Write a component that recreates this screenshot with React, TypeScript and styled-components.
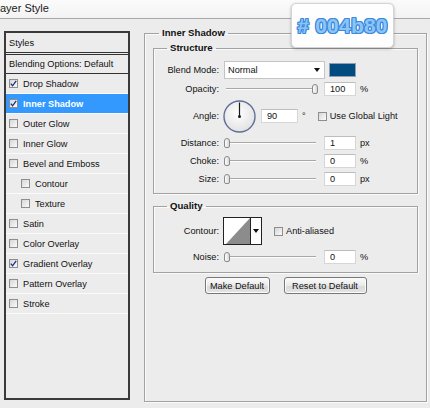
import React from "react"
import styled, { createGlobalStyle } from "styled-components"

const GlobalStyle = createGlobalStyle`
    html, body {
        margin: 0;
        padding: 0;
        background: #ececec;
    }
    body {
        font-family: "Liberation Sans", Arial, sans-serif;
        font-size: 9.2px;
        color: #111;
    }
`

const Window = styled.div`
    width: 430px;
    height: 408px;
    position: relative;
    overflow: hidden;
    background: #ececec;
`

const TitleBar = styled.div`
    display: flex;
    align-items: center;
    background: linear-gradient(#fbfbfb, #f3f3f3);
    border-bottom: 1px solid #a9a9a9;
    font-size: 11px;
    color: #1a1a1a;
    padding-bottom: 3px;
    box-sizing: content-box;
    height: 15px;
`

const Main = styled.div`
    display: flex;
    align-items: flex-start;
    padding: 8px 0 0 4px;
    gap: 14px;
`

const StylesPanel = styled.div`
    margin-top: 4px;
    width: 126px;
    height: 369px;
    box-sizing: border-box;
    border: 2px solid #3a3a3a;
    display: flex;
    flex-direction: column;
`

const PanelHeader = styled.div`
    height: 19px;
    display: flex;
    align-items: center;
    padding-left: 3px;
    border-bottom: 3px double #333;
`

const BlendingRow = styled.div`
    height: 18px;
    display: flex;
    align-items: center;
    padding-left: 3px;
    border-bottom: 1px solid #333;
`

const StyleItem = styled.div<{ $active?: boolean; $indent?: boolean }>`
    height: 19px;
    display: flex;
    align-items: center;
    gap: 5px;
    padding-left: ${({ $indent }) => ($indent ? "15px" : "3px")};
    border-bottom: 1px solid #fbfbfb;
    background: ${({ $active }) => ($active ? "#3399ff" : "transparent")};
    color: ${({ $active }) => ($active ? "#fff" : "#111")};
    font-weight: ${({ $active }) => ($active ? "bold" : "normal")};
`

const Box = styled.span`
    width: 9px;
    height: 9px;
    flex: none;
    box-sizing: border-box;
    border: 1px solid #8e8e8e;
    background: linear-gradient(135deg, #d6d6d6, #fbfbfb);
    display: inline-flex;
    align-items: center;
    justify-content: center;
`

const CheckBox: React.FC<{ checked?: boolean }> = ({ checked }) => (
    <Box>
        {checked && (
            <svg width="7" height="7" viewBox="0 0 7 7">
                <path d="M0.8 3.6 L2.6 5.8 L6.2 0.8" fill="none" stroke="#1c2f86" strokeWidth="1.3" />
            </svg>
        )}
    </Box>
)

const Group = styled.fieldset<{ $width?: number; $height?: number; $pad?: number; $mt?: number }>`
    margin: ${({ $mt }) => $mt || 0}px 0 0 0;
    min-inline-size: 0;
    box-sizing: border-box;
    border: 1px solid #a2a2a2;
    box-shadow: inset 1px 1px 0 #fafafa, 1px 1px 0 #fafafa;
    padding: 0 ${({ $pad }) => $pad || 0}px;
    ${({ $width }) => ($width ? `width: ${$width}px;` : "")}
    ${({ $height }) => ($height ? `height: ${$height}px;` : "")}
`

const Legend = styled.legend<{ $offset: number }>`
    font-weight: bold;
    font-size: 9.6px;
    line-height: 12px;
    padding: 0 3px;
    margin-left: ${({ $offset }) => $offset}px;
    color: #111;
`

const GroupBody = styled.div<{ $top: number; $bottom: number }>`
    display: flex;
    flex-direction: column;
    padding: ${({ $top }) => $top}px 0 ${({ $bottom }) => $bottom}px 0;
`

const OuterBody = styled.div`
    display: flex;
    flex-direction: column;
    padding-top: 3px;
`

const Row = styled.div<{ $h: number; $mt?: number }>`
    height: ${({ $h }) => $h}px;
    margin-top: ${({ $mt }) => $mt || 0}px;
    display: flex;
    align-items: center;
`

const Label = styled.div`
    width: 65px;
    text-align: right;
    margin-right: 5px;
    flex: none;
`

const Select = styled.div`
    width: 101px;
    height: 18px;
    box-sizing: border-box;
    background: #fff;
    border: 1px solid #c4c4c4;
    display: flex;
    align-items: center;
    justify-content: space-between;
    padding: 0 4px 0 3px;
`

const Caret = styled.span`
    width: 0;
    height: 0;
    border-left: 3px solid transparent;
    border-right: 3px solid transparent;
    border-top: 4px solid #111;
`

const Swatch = styled.div`
    width: 27px;
    height: 14px;
    margin-left: 4px;
    background: #004b80;
    border: 1px solid #8d9fb0;
    box-sizing: border-box;
`

const SliderWrap = styled.div`
    width: 94px;
    height: 12px;
    position: relative;
    display: flex;
    align-items: center;
    flex: none;
`

const Track = styled.div`
    width: 100%;
    height: 1px;
    margin: 0 2px;
    background: #a8a8a8;
    border-bottom: 1px solid #fdfdfd;
`

const Thumb = styled.div`
    position: absolute;
    top: 1px;
    width: 6px;
    height: 10px;
    box-sizing: border-box;
    border: 1px solid #8a8a8a;
    border-radius: 3px 3px 2px 2px;
    background: linear-gradient(90deg, #fdfdfd, #d9d9d9);
`

const Slider: React.FC<{ value: number }> = ({ value }) => (
    <SliderWrap>
        <Track />
        <Thumb style={{ left: `${value * 88}px` }} />
    </SliderWrap>
)

const NumberInput = styled.div<{ $w?: number; $ml?: number }>`
    width: ${({ $w }) => $w || 32}px;
    height: 14px;
    margin-left: ${({ $ml }) => ($ml === undefined ? 6 : $ml)}px;
    box-sizing: border-box;
    background: #fff;
    border: 1px solid #d6d6d6;
    border-top-color: #bdbdbd;
    display: flex;
    align-items: center;
    padding-left: 5px;
    flex: none;
`

const Unit = styled.span<{ $raise?: boolean }>`
    margin-left: 4px;
    ${({ $raise }) => ($raise ? "align-self: flex-start; margin-top: 11px;" : "")}
`

const Dial = styled.svg`
    flex: none;
    margin-left: -1px;
`

const InlineCheck = styled.label<{ $ml: number }>`
    display: flex;
    align-items: center;
    gap: 3px;
    margin-left: ${({ $ml }) => $ml}px;
`

const ContourPicker = styled.div`
    display: flex;
    height: 28px;
    box-sizing: border-box;
    border: 1px solid #222;
    margin-left: -1px;
    background: #fff;
`

const ContourArrow = styled.div`
    width: 10px;
    border-left: 1px solid #222;
    display: flex;
    align-items: center;
    justify-content: center;
`

const ButtonRow = styled.div`
    display: flex;
    justify-content: center;
    gap: 14px;
    margin-top: 4px;
`

const Button = styled.button<{ $w: number }>`
    width: ${({ $w }) => $w}px;
    height: 17px;
    padding: 0;
    font-family: inherit;
    font-size: 9.2px;
    color: #111;
    border: 1px solid #777;
    border-radius: 3px;
    background: linear-gradient(#fbfbfb, #e9e9e9 50%, #d9d9d9 51%, #e4e4e4);
    box-shadow: inset 0 0 0 1px #fcfcfc;
`

const ColorBadge = styled.div`
    position: absolute;
    left: 291px;
    top: 3px;
    width: 103px;
    height: 45px;
    box-sizing: border-box;
    background: #fefefe;
    border: 1px solid #d4d4d4;
    border-radius: 5px;
    box-shadow: 0 1px 3px rgba(0, 0, 0, 0.28);
    display: flex;
    align-items: center;
    justify-content: center;
    font-weight: bold;
    font-size: 21px;
    color: #8cc5f5;
    text-shadow: 1px 0 0 #3a8ae0, -1px 0 0 #3a8ae0, 0 1px 0 #3a8ae0, 0 -1px 0 #3a8ae0,
        1px 1px 0 #3a8ae0, -1px -1px 0 #3a8ae0, 1px -1px 0 #3a8ae0, -1px 1px 0 #3a8ae0;
    letter-spacing: 0.2px;
`

const styleItems = [
    { name: "Drop Shadow", checked: true },
    { name: "Inner Shadow", checked: true, active: true },
    { name: "Outer Glow" },
    { name: "Inner Glow" },
    { name: "Bevel and Emboss" },
    { name: "Contour", indent: true },
    { name: "Texture", indent: true },
    { name: "Satin" },
    { name: "Color Overlay" },
    { name: "Gradient Overlay", checked: true },
    { name: "Pattern Overlay" },
    { name: "Stroke" },
]

const App: React.FC = () => {
    return (
        <Window>
            <GlobalStyle />
            <TitleBar>ayer Style</TitleBar>
            <Main>
                <StylesPanel>
                    <PanelHeader>Styles</PanelHeader>
                    <BlendingRow>Blending Options: Default</BlendingRow>
                    {styleItems.map((item) => (
                        <StyleItem key={item.name} $active={item.active} $indent={item.indent}>
                            <CheckBox checked={item.checked} />
                            {item.name}
                        </StyleItem>
                    ))}
                </StylesPanel>

                <Group $width={283} $height={375} $pad={8}>
                    <Legend $offset={6}>Inner Shadow</Legend>
                    <OuterBody>
                        <Group>
                            <Legend $offset={13}>Structure</Legend>
                            <GroupBody $top={7} $bottom={7}>
                                <Row $h={18}>
                                    <Label>Blend Mode:</Label>
                                    <Select>
                                        Normal
                                        <Caret />
                                    </Select>
                                    <Swatch />
                                </Row>
                                <Row $h={14} $mt={3}>
                                    <Label>Opacity:</Label>
                                    <Slider value={1} />
                                    <NumberInput>100</NumberInput>
                                    <Unit>%</Unit>
                                </Row>
                                <Row $h={32} $mt={4}>
                                    <Label>Angle:</Label>
                                    <Dial width="33" height="33" viewBox="0 0 33 33">
                                        <defs>
                                            <radialGradient id="dialFill" cx="0.45" cy="0.4" r="0.6">
                                                <stop offset="0" stopColor="#ffffff" />
                                                <stop offset="1" stopColor="#e2e2e2" />
                                            </radialGradient>
                                        </defs>
                                        <circle cx="16.5" cy="16.5" r="15.5" fill="url(#dialFill)" stroke="#5f6f98" strokeWidth="1.4" />
                                        <line x1="16.5" y1="16.5" x2="16.5" y2="2.5" stroke="#1a1a1a" strokeWidth="1.2" />
                                        <circle cx="16.5" cy="16.5" r="1.5" fill="#1a1a1a" />
                                    </Dial>
                                    <NumberInput $w={37} $ml={5}>90</NumberInput>
                                    <Unit $raise>°</Unit>
                                    <InlineCheck $ml={12}>
                                        <CheckBox />
                                        Use Global Light
                                    </InlineCheck>
                                </Row>
                                <Row $h={14} $mt={4}>
                                    <Label>Distance:</Label>
                                    <Slider value={0} />
                                    <NumberInput>1</NumberInput>
                                    <Unit>px</Unit>
                                </Row>
                                <Row $h={14} $mt={4}>
                                    <Label>Choke:</Label>
                                    <Slider value={0} />
                                    <NumberInput>0</NumberInput>
                                    <Unit>%</Unit>
                                </Row>
                                <Row $h={14} $mt={4}>
                                    <Label>Size:</Label>
                                    <Slider value={0} />
                                    <NumberInput>0</NumberInput>
                                    <Unit>px</Unit>
                                </Row>
                            </GroupBody>
                        </Group>

                        <Group $mt={6}>
                            <Legend $offset={13}>Quality</Legend>
                            <GroupBody $top={5} $bottom={8}>
                                <Row $h={28}>
                                    <Label>Contour:</Label>
                                    <ContourPicker>
                                        <svg width="26" height="26" viewBox="0 0 26 26">
                                            <polygon points="2,26 26,0 26,26" fill="#8c8c8c" />
                                        </svg>
                                        <ContourArrow>
                                            <Caret />
                                        </ContourArrow>
                                    </ContourPicker>
                                    <InlineCheck $ml={12}>
                                        <CheckBox />
                                        Anti-aliased
                                    </InlineCheck>
                                </Row>
                                <Row $h={14} $mt={5}>
                                    <Label>Noise:</Label>
                                    <Slider value={0} />
                                    <NumberInput>0</NumberInput>
                                    <Unit>%</Unit>
                                </Row>
                            </GroupBody>
                        </Group>

                        <ButtonRow>
                            <Button $w={65}>Make Default</Button>
                            <Button $w={83}>Reset to Default</Button>
                        </ButtonRow>
                    </OuterBody>
                </Group>
            </Main>
            <ColorBadge># 004b80</ColorBadge>
        </Window>
    )
}

export default App
